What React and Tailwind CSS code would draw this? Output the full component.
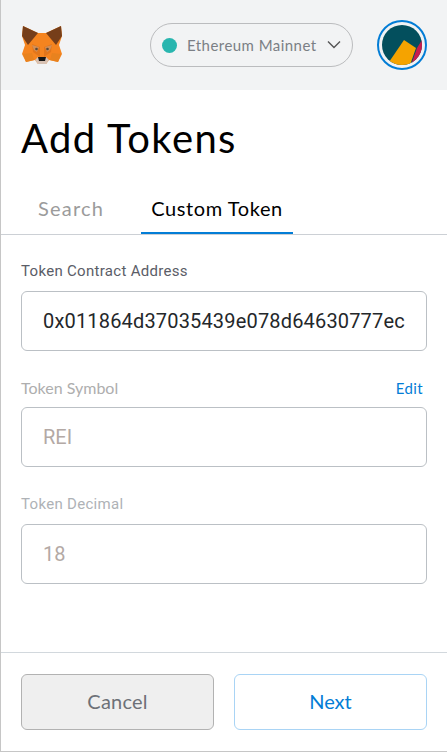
const Fox = () => (
  <svg width="42" height="42" viewBox="0 0 42 42" className="shrink-0">
    <polygon points="2,2 17,9 25,9 40,2 41,12 38,21 41,30 37,38 28,36 25,40 17,40 14,36 5,38 1,30 4,21 1,12" fill="#f5841f" />
    <polygon points="2,2 17,9 7,21 1,12" fill="#763e1a" />
    <polygon points="40,2 25,9 35,21 41,12" fill="#763e1a" />
    <polygon points="11,20 19,23 19,33 12,28" fill="#e2761b" />
    <polygon points="31,20 23,23 23,33 30,28" fill="#e2761b" />
    <polygon points="2,30 11,29 13,36 5,38" fill="#e8821e" />
    <polygon points="40,30 31,29 29,36 37,38" fill="#e8821e" />
    <polygon points="11,21 18,23 16,28 13,26" fill="#c0ad9e" opacity=".45" />
    <polygon points="31,21 24,23 26,28 29,26" fill="#c0ad9e" opacity=".45" />
    <circle cx="15.5" cy="25" r="1.3" fill="#5b4a3a" />
    <circle cx="26.5" cy="25" r="1.3" fill="#5b4a3a" />
    <polygon points="14,36 17,33 25,33 28,36 25,40 17,40" fill="#d7c1b3" />
    <polygon points="17,33 25,33 24,37 18,37" fill="#161616" />
  </svg>
);

const Avatar = () => (
  <div className="w-[50px] h-[50px] rounded-full border-2 border-[#037dd6] p-[3px] bg-[#f2f3f4]">
    <svg viewBox="0 0 40 40" className="w-full h-full rounded-full block">
      <rect width="40" height="40" fill="#034f5d" />
      <polygon points="22,15 34,23 28,40 5,40" fill="#f5a300" />
      <polygon points="40,15 35,23 29,40 40,40" fill="#c81d4e" />
      <polygon points="0,10 4,3 0,0" fill="#c81d4e" />
    </svg>
  </div>
);

const Field = ({ label, value, dark, edit, labelClass, inputClass = "mt-[10px]" }) => (
  <div className="flex flex-col">
    <div className={"flex items-center justify-between h-[18px] " + labelClass}>
      <span>{label}</span>
      {edit && <span className="text-[15px] font-['Lato',sans-serif] tracking-[0.4px] text-[#037dd6] mr-[4px]">Edit</span>}
    </div>
    <div className={"h-[60px] rounded-[6px] border border-[#bbc0c5] bg-white flex items-center px-[21px] text-[20px] font-['Roboto',sans-serif] " + inputClass + " " + (dark ? "text-[#24272a] tracking-[0.17px]" : "text-[#b3a9a5]")}>
      {value}
    </div>
  </div>
);

export default function App() {
  return (
    <div className="relative w-[447px] h-[752px] bg-white flex flex-col border-l border-l-[#c6c6c6] border-b border-b-[#c6c6c6] font-['Lato',sans-serif] overflow-hidden">
      <span className="absolute -left-px top-[14px] w-px h-[5px] bg-[#2fbf71]" />
      <span className="absolute -left-px top-[28px] w-px h-[4px] bg-[#2fbf71]" />
      <header className="h-[90px] bg-[#f2f3f4] flex items-center pl-[20px] pr-[20px] shrink-0">
        <Fox />
        <div className="ml-auto w-[203px] h-[44px] rounded-full border border-[#bbbcbe] flex items-center pl-[11px] pr-[10px]">
          <span className="w-[15px] h-[15px] rounded-full bg-[#29b6af] shrink-0" />
          <span className="ml-[10px] text-[15px] text-[#7b7f85] tracking-[0.45px] whitespace-nowrap">Ethereum Mainnet</span>
          <svg width="16" height="10" viewBox="0 0 16 10" fill="none" stroke="#555" strokeWidth="1.4" className="ml-auto"><path d="M2 1.5 L8 7.5 L14 1.5" /></svg>
        </div>
        <div className="ml-[24px]"><Avatar /></div>
      </header>

      <h1 className="mt-[26px] ml-[20px] text-[40px] leading-[44px] text-black tracking-[1.4px]">Add Tokens</h1>

      <div className="mt-[28px] h-[47px] border-b border-[#ccd0d5] flex items-stretch pl-[20px] text-[20px]">
        <div className="w-[102px] pl-[17px] pt-[5px] text-[#9b9b9b] tracking-[1.2px]">Search</div>
        <div className="ml-[18px] w-[152px] border-b-2 border-[#037dd6] text-center pt-[5px] text-black tracking-[0.6px]">Custom Token</div>
      </div>

      <main className="flex-1 px-[20px] pt-[27px] flex flex-col gap-[28px]">
        <Field label="Token Contract Address" value="0x011864d37035439e078d64630777ec" dark inputClass="mt-[11px]" labelClass="text-[15px] font-['Roboto',sans-serif] tracking-[0.3px] text-[#5b5d67]" />
        <Field label="Token Symbol" value="REI" edit labelClass="text-[16px] text-[#aeaeae]" />
        <Field label="Token Decimal" value="18" inputClass="mt-[11px]" labelClass="text-[15px] font-['Roboto',sans-serif] tracking-[0.3px] text-[#aeb2b6]" />
      </main>

      <footer className="h-[99px] border-t border-[#d2d8dd] flex items-start gap-[20px] px-[20px] pt-[21px] shrink-0">
        <button className="flex-1 h-[56px] pb-[2px] rounded-[6px] border border-[#b2b2b2] bg-[#efefef] text-[20px] text-[#6d7178] tracking-[0.2px]">Cancel</button>
        <button className="flex-1 h-[56px] pb-[2px] rounded-[6px] border border-[#a9d4f5] bg-white text-[20px] text-[#037dd6]">Next</button>
      </footer>
    </div>
  );
}
